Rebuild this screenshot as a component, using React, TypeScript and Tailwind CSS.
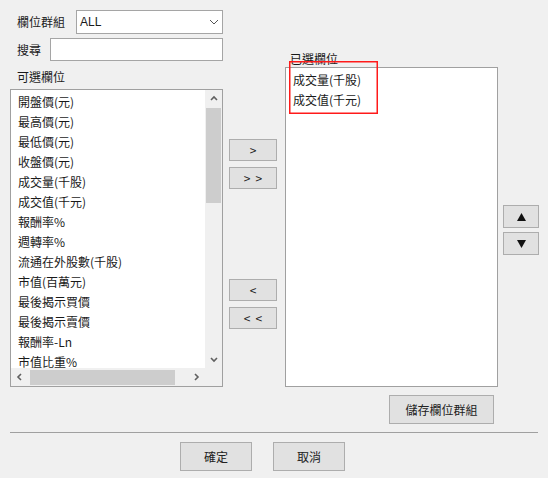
import React from 'react'

const font = { fontFamily: '"Noto Sans CJK TC", "Noto Sans", sans-serif' }

const available = [
  '開盤價(元)',
  '最高價(元)',
  '最低價(元)',
  '收盤價(元)',
  '成交量(千股)',
  '成交值(千元)',
  '報酬率%',
  '週轉率%',
  '流通在外股數(千股)',
  '市值(百萬元)',
  '最後揭示買價',
  '最後揭示賣價',
  '報酬率-Ln',
  '市值比重%',
]

const selected = ['成交量(千股)', '成交值(千元)']

function Chevron({ dir }: { dir: 'up' | 'down' | 'left' | 'right' }) {
  const d = {
    up: 'M1 5 L4 2 L7 5',
    down: 'M1 2 L4 5 L7 2',
    left: 'M5 1 L2 4 L5 7',
    right: 'M2 1 L5 4 L2 7',
  }[dir]
  return (
    <svg width="8" height="8" viewBox="0 0 8 8">
      <path d={d} fill="none" stroke="#606060" strokeWidth="1.6" />
    </svg>
  )
}

function Btn({ children, className = '' }: { children: React.ReactNode; className?: string }) {
  return (
    <div
      className={`flex items-center justify-center border border-[#adadad] bg-[#e1e1e1] text-[12px] text-[#222] ${className}`}
    >
      {children}
    </div>
  )
}

export default function App() {
  return (
    <div className="w-[552px] h-[482px] bg-white" style={font}>
      <div className="w-[548px] h-[478px] bg-[#f0f0f0] pt-[10px] text-[12px] text-[#1a1a1a]">
        <div className="flex pl-[10px]">
          {/* left column */}
          <div className="w-[213px] flex flex-col">
            <div className="flex items-center h-[24px]">
              <span className="w-[66px] pl-[7px] leading-none">欄位群組</span>
              <div className="flex-1 h-[24px] bg-white border border-[#a5a5a5] flex items-center justify-between pl-[3px] pr-[3px]">
                <span className="text-[12px]" style={{ fontFamily: '"Liberation Sans", sans-serif' }}>ALL</span>
                <svg width="10" height="6" viewBox="0 0 10 6">
                  <path d="M1 1 L5 5 L9 1" fill="none" stroke="#555" strokeWidth="1" />
                </svg>
              </div>
            </div>
            <div className="flex items-center h-[23px] mt-[4px]">
              <span className="w-[40px] pl-[7px] leading-none">搜尋</span>
              <div className="flex-1 h-[23px] bg-white border border-[#a5a5a5]" />
            </div>
            <div className="mt-[8px] h-[16px] pl-[7px] leading-[16px]">可選欄位</div>
            <div className="mt-[4px] h-[298px] bg-white border border-[#a0a0a0] flex flex-col">
              <div className="flex flex-1 min-h-0">
                <div className="flex-1 overflow-hidden pt-[2px] pl-[7px]">
                  {available.map((t) => (
                    <div key={t} className="h-[20px] leading-[20px] whitespace-nowrap">
                      {t}
                    </div>
                  ))}
                </div>
                <div className="w-[17px] bg-[#f0f0f0] flex flex-col items-center">
                  <div className="h-[17px] flex items-center justify-center">
                    <Chevron dir="up" />
                  </div>
                  <div className="mt-[1px] w-[15px] h-[95px] bg-[#cdcdcd]" />
                  <div className="flex-1" />
                  <div className="h-[17px] flex items-center justify-center">
                    <Chevron dir="down" />
                  </div>
                </div>
              </div>
              <div className="h-[18px] flex">
                <div className="flex-1 bg-[#f0f0f0] flex items-center">
                  <div className="w-[17px] flex justify-center">
                    <Chevron dir="left" />
                  </div>
                  <div className="ml-[2px] w-[145px] h-[15px] bg-[#cdcdcd]" />
                  <div className="flex-1" />
                  <div className="w-[17px] flex justify-center">
                    <Chevron dir="right" />
                  </div>
                </div>
                <div className="w-[17px] bg-[#f0f0f0]" />
              </div>
            </div>
          </div>

          {/* middle buttons */}
          <div className="ml-[6px] w-[48px] flex flex-col">
            <Btn className="mt-[129px] h-[22px]">&gt;</Btn>
            <Btn className="mt-[6px] h-[22px] gap-[5px]">
              <span>&gt;</span>
              <span>&gt;</span>
            </Btn>
            <Btn className="mt-[90px] h-[22px]">&lt;</Btn>
            <Btn className="mt-[6px] h-[22px] gap-[5px]">
              <span>&lt;</span>
              <span>&lt;</span>
            </Btn>
          </div>

          {/* right column */}
          <div className="ml-[8px] w-[213px] flex flex-col relative">
            <div className="mt-[41px] h-[16px] pl-[5px] leading-[16px]">已選欄位</div>
            <div className="h-[320px] bg-white border border-[#a0a0a0] pt-[2px] pl-[7px]">
              {selected.map((t) => (
                <div key={t} className="h-[20px] leading-[20px] whitespace-nowrap">
                  {t}
                </div>
              ))}
            </div>
            {/* highlight annotation */}
            <div className="absolute left-[4px] top-[51px] w-[89px] h-[53px] ring-[1.5px] ring-inset ring-[#ff1a1a]" />
          </div>

          {/* up/down */}
          <div className="ml-[5px] w-[36px] flex flex-col">
            <Btn className="mt-[195px] h-[23px]">
              <svg width="9" height="8" viewBox="0 0 9 8">
                <path d="M4.5 0 L9 8 L0 8 Z" fill="#111" />
              </svg>
            </Btn>
            <Btn className="mt-[4px] h-[23px]">
              <svg width="9" height="8" viewBox="0 0 9 8">
                <path d="M0 0 L9 0 L4.5 8 Z" fill="#111" />
              </svg>
            </Btn>
          </div>
        </div>

        <div className="flex justify-end pr-[54px] mt-[8px]">
          <Btn className="w-[105px] h-[29px]">儲存欄位群組</Btn>
        </div>

        <div className="mx-[10px] mt-[8px] h-px bg-[#a0a0a0]" />

        <div className="flex gap-[21px] pl-[180px] mt-[9px]">
          <Btn className="w-[72px] h-[29px]">確定</Btn>
          <Btn className="w-[72px] h-[29px]">取消</Btn>
        </div>
      </div>
    </div>
  )
}
